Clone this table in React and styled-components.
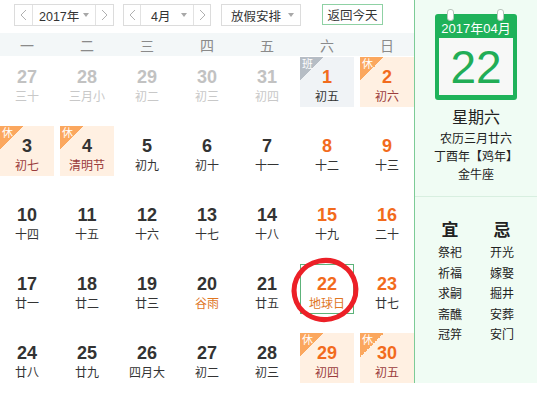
import React from "react";
import styled, { createGlobalStyle } from "styled-components";

const Global = createGlobalStyle`
  html, body { margin: 0; padding: 0; background: #fff; }
  body { font-family: "Liberation Sans", "Noto Sans CJK SC", sans-serif; }
`;

const Page = styled.div`
  display: flex;
  width: 537px;
  height: 383px;
  overflow: hidden;
`;

const Left = styled.div`
  width: 414px;
  flex: none;
  display: flex;
  flex-direction: column;
`;

const Toolbar = styled.div`
  height: 34px;
  box-sizing: border-box;
  padding: 4px 0 0 14px;
  display: flex;
  align-items: flex-start;
`;

const SelectBox = styled.div`
  display: flex;
  height: 22px;
  box-sizing: border-box;
  border: 1px solid #dcdcdc;
  background: #fff;
  margin-right: ${(p) => p.$mr || 0}px;
`;

const ArrowSeg = styled.div`
  width: ${(p) => p.$w}px;
  display: flex;
  align-items: center;
  justify-content: center;
  border-left: ${(p) => (p.$divLeft ? "1px solid #e2e2e2" : "none")};
  border-right: ${(p) => (p.$divRight ? "1px solid #e2e2e2" : "none")};
`;

const MidSeg = styled.div`
  width: ${(p) => p.$w}px;
  display: flex;
  align-items: center;
  justify-content: space-between;
  padding: 0 6px 0 ${(p) => p.$pl}px;
  box-sizing: border-box;
  font-size: 12.5px;
  color: #333;
`;

const Tri = styled.span`
  width: 0;
  height: 0;
  border-left: 3.5px solid transparent;
  border-right: 3.5px solid transparent;
  border-top: 4px solid #a8a8a8;
`;

const TodayBtn = styled.div`
  height: 21px;
  width: 61px;
  box-sizing: border-box;
  border: 1px solid #8fd1a4;
  font-size: 12.5px;
  color: #333;
  display: flex;
  align-items: center;
  justify-content: center;
`;

const WeekRow = styled.div`
  height: 24px;
  background: #f3f7f8;
  display: grid;
  grid-template-columns: repeat(7, 54px);
  column-gap: 6px;
  align-items: center;
`;

const WeekLabel = styled.div`
  text-align: center;
  font-size: 14px;
  color: #8a8a8a;
  padding-top: 2px;
`;

const Grid = styled.div`
  display: grid;
  grid-template-columns: repeat(7, 54px);
  grid-auto-rows: 50px;
  column-gap: 6px;
  row-gap: 19px;
  padding-top: 1px;
`;

const Cell = styled.div`
  position: relative;
  box-sizing: border-box;
  background: ${(p) => (p.$tag === "休" ? "#fff0e2" : p.$tag === "班" ? "#f0f3f6" : "#fff")};
  border: ${(p) => (p.$sel ? "1px solid #5db37a" : "none")};
  display: flex;
  flex-direction: column;
  align-items: center;
  padding-top: ${(p) => (p.$sel ? 9 : 10)}px;
`;

const Num = styled.div`
  font-size: 18px;
  font-weight: bold;
  line-height: 20px;
  color: ${(p) => p.$c};
`;

const Lunar = styled.div`
  font-size: 12px;
  line-height: 20px;
  color: ${(p) => p.$c};
  white-space: nowrap;
`;

const Tag = styled.div`
  position: absolute;
  left: 0;
  top: 0;
  width: 24px;
  height: 24px;
  background: linear-gradient(135deg, ${(p) => p.$bg} 50%, transparent 50%);
  color: #fff;
  font-size: 11px;
  line-height: 12px;
  padding: 1px 0 0 2px;
  box-sizing: border-box;
`;

const Circle = styled.svg`
  position: absolute;
  left: -13px;
  top: -12px;
  pointer-events: none;
  overflow: visible;
`;

const Panel = styled.div`
  flex: 1;
  border-left: 1px solid #7ccb96;
  background: #f0fcf4;
  display: flex;
  flex-direction: column;
  align-items: center;
`;

const CalIcon = styled.div`
  position: relative;
  margin-top: 14px;
  width: 82px;
  height: 86px;
  background: #1fb25a;
  border-radius: 3px;
  box-sizing: border-box;
  padding: 0 4px 5px;
  display: flex;
  flex-direction: column;
`;

const Ring = styled.span`
  position: absolute;
  top: -5px;
  left: ${(p) => p.$x}px;
  width: 5px;
  height: 10px;
  background: #fff;
  border: 1px solid #b8c4bc;
  border-radius: 3px;
`;

const CalHead = styled.div`
  height: 24px;
  color: #fff;
  font-size: 13px;
  display: flex;
  align-items: center;
  justify-content: center;
  padding-top: 2px;
  box-sizing: border-box;
`;

const CalBody = styled.div`
  flex: 1;
  background: #f7f8f7;
  color: #21ad56;
  font-size: 46px;
  display: flex;
  align-items: center;
  justify-content: center;
`;

const Info = styled.div`
  margin-top: 6px;
  display: flex;
  flex-direction: column;
  align-items: center;
  color: #222;
`;

const Weekday = styled.div`
  font-size: 16px;
  line-height: 24px;
`;

const InfoLine = styled.div`
  font-size: 12px;
  line-height: 18px;
  white-space: nowrap;
`;

const Divider = styled.div`
  align-self: stretch;
  height: 1px;
  background: #d8efe0;
  margin-top: 12px;
`;

const YiJi = styled.div`
  margin-top: 22px;
  display: grid;
  grid-template-columns: 40px 40px;
  column-gap: 12px;
  justify-items: center;
`;

const YiCol = styled.div`
  display: flex;
  flex-direction: column;
  align-items: center;
`;

const YiHead = styled.div`
  font-family: "DejaVu Serif", "Noto Sans CJK SC", serif;
  font-weight: bold;
  font-size: 17px;
  line-height: 22px;
  color: #222;
  margin-bottom: 2px;
`;

const YiItem = styled.div`
  font-size: 12px;
  line-height: 20.5px;
  color: #222;
`;

const Chevron = ({ dir }) => (
  <svg width="7" height="12" viewBox="0 0 7 12">
    <path
      d={dir === "l" ? "M6 1 L1 6 L6 11" : "M1 1 L6 6 L1 11"}
      fill="none"
      stroke="#b0b0b0"
      strokeWidth="1"
    />
  </svg>
);

const GREY = "#c2c2c2";
const GREY_L = "#c8c8c8";
const DARK = "#333";
const ORANGE = "#f26b1d";
const HOLI = "#9b3c3c";

const days = [
  ["27", "三十", "o"], ["28", "三月小", "o"], ["29", "初二", "o"], ["30", "初三", "o"], ["31", "初四", "o"],
  ["1", "初五", "w", "班"], ["2", "初六", "w", "休"],
  ["3", "初七", "n", "休"], ["4", "清明节", "n", "休"], ["5", "初九", "n"], ["6", "初十", "n"], ["7", "十一", "n"], ["8", "十二", "w"], ["9", "十三", "w"],
  ["10", "十四", "n"], ["11", "十五", "n"], ["12", "十六", "n"], ["13", "十七", "n"], ["14", "十八", "n"], ["15", "十九", "w"], ["16", "二十", "w"],
  ["17", "廿一", "n"], ["18", "廿二", "n"], ["19", "廿三", "n"], ["20", "谷雨", "n", null, "fest"], ["21", "廿五", "n"], ["22", "地球日", "w", null, "fest", true], ["23", "廿七", "w"],
  ["24", "廿八", "n"], ["25", "廿九", "n"], ["26", "四月大", "n"], ["27", "初二", "n"], ["28", "初三", "n"], ["29", "初四", "w", "休"], ["30", "初五", "w", "休"],
];

const weekLabels = ["一", "二", "三", "四", "五", "六", "日"];

export default function App() {
  return (
    <Page>
      <Global />
      <Left>
        <Toolbar>
          <SelectBox $mr={9}>
            <ArrowSeg $w={17} $divRight><Chevron dir="l" /></ArrowSeg>
            <MidSeg $w={62} $pl={6}>2017年<Tri /></MidSeg>
            <ArrowSeg $w={17} $divLeft><Chevron dir="r" /></ArrowSeg>
          </SelectBox>
          <SelectBox $mr={10}>
            <ArrowSeg $w={16} $divRight><Chevron dir="l" /></ArrowSeg>
            <MidSeg $w={52} $pl={10}>4月<Tri /></MidSeg>
            <ArrowSeg $w={16} $divLeft><Chevron dir="r" /></ArrowSeg>
          </SelectBox>
          <SelectBox $mr={21}>
            <MidSeg $w={78} $pl={9}>放假安排<Tri /></MidSeg>
          </SelectBox>
          <TodayBtn>返回今天</TodayBtn>
        </Toolbar>
        <WeekRow>
          {weekLabels.map((w) => (
            <WeekLabel key={w}>{w}</WeekLabel>
          ))}
        </WeekRow>
        <Grid>
          {days.map(([n, l, kind, tag, fest, sel], i) => {
            const numC = kind === "o" ? GREY : kind === "w" ? ORANGE : DARK;
            let lunC = kind === "o" ? GREY_L : DARK;
            if (tag === "休") lunC = HOLI;
            if (fest) lunC = "#e0761f";
            return (
              <Cell key={i} $tag={tag} $sel={sel}>
                {tag && <Tag $bg={tag === "休" ? "#fba75e" : "#b6bdc5"}>{tag}</Tag>}
                <Num $c={numC}>{n}</Num>
                <Lunar $c={lunC}>{l}</Lunar>
                {sel && (
                  <Circle width="76" height="76" viewBox="0 0 76 76">
                    <ellipse
                      cx="37"
                      cy="37"
                      rx="31"
                      ry="29.5"
                      transform="rotate(-12 37 37)"
                      fill="none"
                      stroke="#ec2027"
                      strokeWidth="5"
                    />
                  </Circle>
                )}
              </Cell>
            );
          })}
        </Grid>
      </Left>
      <Panel>
        <CalIcon>
          <Ring $x={12} />
          <Ring $x={62} />
          <CalHead>2017年04月</CalHead>
          <CalBody>22</CalBody>
        </CalIcon>
        <Info>
          <Weekday>星期六</Weekday>
          <InfoLine>农历三月廿六</InfoLine>
          <InfoLine>丁酉年【鸡年】</InfoLine>
          <InfoLine>金牛座</InfoLine>
        </Info>
        <Divider />
        <YiJi>
          <YiCol>
            <YiHead>宜</YiHead>
            {["祭祀", "祈福", "求嗣", "斋醮", "冠笄"].map((t) => (
              <YiItem key={t}>{t}</YiItem>
            ))}
          </YiCol>
          <YiCol>
            <YiHead>忌</YiHead>
            {["开光", "嫁娶", "掘井", "安葬", "安门"].map((t) => (
              <YiItem key={t}>{t}</YiItem>
            ))}
          </YiCol>
        </YiJi>
      </Panel>
    </Page>
  );
}
